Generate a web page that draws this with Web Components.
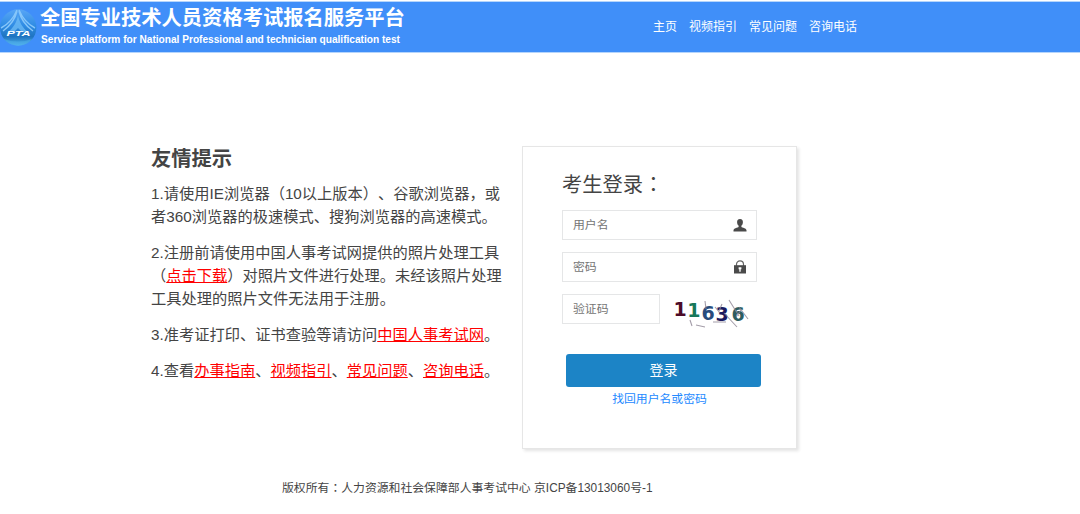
<!DOCTYPE html>
<html lang="zh-CN">
<head>
<meta charset="utf-8">
<title>全国专业技术人员资格考试报名服务平台</title>
<style>
    body {
        margin: 0;
        background: #fff;
        color: #444;
        font-family: "Liberation Sans", "Noto Sans CJK SC", sans-serif;
        text-spacing-trim: space-all;
        overflow: hidden;
    }
    main {
        display: flex;
        align-items: flex-start;
        padding: 93px 0 0 151px;
    }
    info-tips {
        margin-right: 20px;
    }
    /* the TC face keeps the mark in the middle of its cell */
    .mid {
        font-family: "Noto Sans CJK TC", sans-serif;
        line-height: 1;
    }
</style>
</head>
<body>
<site-header heading="全国专业技术人员资格考试报名服务平台" sub="Service platform for National Professional and technician qualification test">
    <nav-link>主页</nav-link>
    <nav-link>视频指引</nav-link>
    <nav-link>常见问题</nav-link>
    <nav-link>咨询电话</nav-link>
</site-header>
<main>
    <info-tips heading="友情提示">
        <tip-item>1.请使用IE浏览器（10以上版本）、谷歌浏览器，或<br>者360浏览器的极速模式、搜狗浏览器的高速模式。</tip-item>
        <tip-item>2.注册前请使用中国人事考试网提供的照片处理工具<br>（<red-link>点击下载</red-link>）对照片文件进行处理。未经该照片处理<br>工具处理的照片文件无法用于注册。</tip-item>
        <tip-item>3.准考证打印、证书查验等请访问<red-link>中国人事考试网</red-link>。</tip-item>
        <tip-item>4.查看<red-link>办事指南</red-link>、<red-link>视频指引</red-link>、<red-link>常见问题</red-link>、<red-link>咨询电话</red-link>。</tip-item>
    </info-tips>
    <login-card heading="考生登录">
        <input-field label="用户名">
            <svg slot="icon" width="14" height="13" viewBox="0 0 14 13" fill="#4a4a4a"><path d="M7 0C4.800 0 4 1.500 4.100 3.400c.1 1.500.7 2.600 1.500 3.200v1.500C4.800 9 .8 9.100.5 11.200V12.500h13v-1.300C13.200 9.100 9.200 9 8.400 8.100V6.600C9.200 6 9.800 4.900 9.900 3.400 10 1.500 9.200 0 7 0z"/></svg>
        </input-field>
        <input-field label="密码">
            <svg slot="icon" width="14" height="14" viewBox="0 0 14 14"><path d="M3.500 6V4.300a3.500 3.500 0 0 1 7 0V6" fill="none" stroke="#666" stroke-width="1.200"/><path d="M1 5.200h12v8.300H1z" fill="#4a4a4a"/><path d="M5.600 7.200h2.800v2H7.700v2.600H6.300V9.200h-.7z" fill="#fff"/></svg>
        </input-field>
        <div slot="code" style="display:flex">
            <input-field label="验证码" style="width:98px"></input-field>
            <captcha-image code="11636"></captcha-image>
        </div>
    </login-card>
</main>
<page-footer>版权所有<span class="mid" lang="zh-TW">：</span>人力资源和社会保障部人事考试中心 京ICP备13013060号-1</page-footer>

<script>
class SiteHeader extends HTMLElement {
    constructor() {
        super();
        this.shadow = this.attachShadow({ mode: 'open' });
    }

    connectedCallback() {
        this.shadow.innerHTML = `
        <style>
            :host {
                display: flex;
                box-sizing: border-box;
                height: 52px;
                margin-top: 1px;
                background: #408ff9;
                border-top: 1px solid #b5d5fc;
                border-bottom: 1px solid #b5d5fc;
                color: white;
            }
            .logo {
                width: 37px;
                height: 38px;
                margin-top: 6px;
            }
            .titles {
                width: 401px;
                padding-left: 3px;
                white-space: nowrap;
            }
            h1 {
                margin: 0;
                font: bold 20.28px/29px "Noto Sans CJK SC", sans-serif;
            }
            p {
                margin: 0 0 0 1px;
                font: bold 10.140px/18px "Liberation Sans", sans-serif;
            }
            nav {
                display: flex;
                gap: 12px;
                margin-left: 212px;
                padding-top: 16px;
            }
        </style>
        <svg class="logo" viewBox="0 0 37 38">
            <defs>
                <linearGradient id="globe" x1="0" y1="0" x2="0" y2="1">
                    <stop offset="0" stop-color="#58a6f6"/>
                    <stop offset=".45" stop-color="#2f8ce4"/>
                    <stop offset=".75" stop-color="#1f74c0"/>
                    <stop offset="1" stop-color="#52b4ee"/>
                </linearGradient>
            </defs>
            <circle cx="18.200" cy="19.500" r="18.200" fill="url(#globe)"/>
            <path d="M17 2C14 9 9 16 1 20M17 3C15 12 10 18 3 23M19 2C22 9 27 16 35 20M19 3C21 12 26 18 33 23" fill="none" stroke="#86c6fa" stroke-width="1.400"/>
            <path d="M18 7C17 14 13 20 8 24h6l4-4 4 4h6C23 20 19 14 18 7z" fill="#6fbcf5" opacity=".75"/>
            <path d="M4 31q14 5 28 0-5 6.500-14 6.500T4 31z" fill="#4fb0ec" opacity=".5"/>
            <text x="6.500" y="27.500" textLength="24" lengthAdjust="spacingAndGlyphs" font-family="Liberation Sans, sans-serif" font-size="7.500" font-weight="bold" font-style="italic" fill="#fff">PTA</text>
        </svg>
        <div class="titles">
            <h1>${this.getAttribute('heading')}</h1>
            <p>${this.getAttribute('sub')}</p>
        </div>
        <nav><slot></slot></nav>
        `;
    }
}

class NavLink extends HTMLElement {
    constructor() {
        super();
        this.attachShadow({ mode: 'open' }).innerHTML = `
        <style>
            :host {
                display: block;
                font-size: 12px;
                line-height: 18px;
                white-space: nowrap;
            }
        </style>
        <slot></slot>
        `;
    }
}

class InfoTips extends HTMLElement {
    constructor() {
        super();
        this.shadow = this.attachShadow({ mode: 'open' });
    }

    connectedCallback() {
        this.shadow.innerHTML = `
        <style>
            :host {
                display: block;
                width: 351px;
            }
            h2 {
                margin: 0 0 12px;
                padding-top: 1px;
                font-size: 20.3px;
                line-height: 24px;
            }
        </style>
        <h2>${this.getAttribute('heading')}</h2>
        <slot></slot>
        `;
    }
}

class TipItem extends HTMLElement {
    constructor() {
        super();
        this.attachShadow({ mode: 'open' }).innerHTML = `
        <style>
            :host {
                display: block;
                margin-bottom: 13.4px;
                font-size: 15.25px;
                line-height: 22.8px;
                white-space: nowrap;
            }
        </style>
        <slot></slot>
        `;
    }
}

class RedLink extends HTMLElement {
    constructor() {
        super();
        // inline element: no whitespace around the link
        this.attachShadow({ mode: 'open' }).innerHTML =
            '<style>:host { display: inline; } a { color: #f00; text-decoration: underline; }</style><a><slot></slot></a>';
    }
}

class LoginCard extends HTMLElement {
    constructor() {
        super();
        this.shadow = this.attachShadow({ mode: 'open' });
    }

    connectedCallback() {
        this.shadow.innerHTML = `
        <style>
            :host {
                display: block;
                box-sizing: border-box;
                width: 275px;
                height: 303px;
                padding: 24px 39px 0;
                border: 1px solid #e6e6e6;
                box-shadow: 2px 2px 3px #e4e4e4;
            }
            h3 {
                margin: 0 0 11px;
                font-size: 20.3px;
                font-weight: normal;
                line-height: 28px;
            }
            .colon {
                font-family: "Noto Sans CJK TC", sans-serif;
                line-height: 1;
            }
            .fields {
                display: flex;
                flex-direction: column;
                gap: 12px;
            }
            button {
                display: block;
                width: 195px;
                height: 33px;
                margin: 30px 0 0 4px;
                padding: 0 0 3px;
                border: 0;
                border-radius: 3px;
                background: #1c84c6;
                color: white;
                font: 14px "Noto Sans CJK SC", sans-serif;
            }
            a {
                display: block;
                margin: 3px 0 0;
                color: #2389ff;
                font-size: 11.85px;
                line-height: 18px;
                text-align: center;
            }
        </style>
        <h3>${this.getAttribute('heading')}<span class="colon" lang="zh-TW">：</span></h3>
        <div class="fields">
            <slot></slot>
            <slot name="code"></slot>
        </div>
        <button>登录</button>
        <a>找回用户名或密码</a>
        `;
    }
}

class InputField extends HTMLElement {
    constructor() {
        super();
        this.shadow = this.attachShadow({ mode: 'open' });
    }

    connectedCallback() {
        this.shadow.innerHTML = `
        <style>
            :host {
                display: flex;
                box-sizing: border-box;
                align-items: center;
                justify-content: space-between;
                height: 30px;
                padding: 0 9px 0 10px;
                border: 1px solid #e5e6e7;
                color: #757575;
                font-size: 11.85px;
            }
            span {
                padding-bottom: 3px;
            }
            ::slotted(svg) {
                display: block;
            }
        </style>
        <span>${this.getAttribute('label')}</span>
        <slot name="icon"></slot>
        `;
    }
}

class CaptchaImage extends HTMLElement {
    constructor() {
        super();
        this.shadow = this.attachShadow({ mode: 'open' });
    }

    connectedCallback() {
        const colors = ['#4d0b28', '#17785a', '#284b7c', '#1b1a60', '#2c5c60'];
        const xs = [8.5, 22.2, 36.5, 50.5, 66.5];
        const ys = [22, 23, 25.5, 26.5, 26.500];
        const digits = [...this.getAttribute('code')].map((d, i) =>
            `<text x="${xs[i]}" y="${ys[i]}" fill="${colors[i]}">${d}</text>`).join('');
        this.shadow.innerHTML = `
        <style>
            :host {
                display: block;
                width: 88px;
                height: 36px;
                margin: 0 -16px -6px 5px;
            }
            svg {
                display: block;
                font: bold 19px "DejaVu Sans", sans-serif;
            }
        </style>
        <svg width="88" height="36" viewBox="0 0 88 36">
            ${digits}
            <path d="M25 26l2 6M31 31l9 2M40 7l1 8M48 28h13M50 13l5 6M57 10l-3 7M59 19l13 14M64 6l10 16M74 13l9 12M71 23l5-7" fill="none" stroke="#8d8494" stroke-width="1.100" opacity=".8"/>
        </svg>
        `;
    }
}

class PageFooter extends HTMLElement {
    constructor() {
        super();
        this.attachShadow({ mode: 'open' }).innerHTML = `
        <style>
            :host {
                display: block;
                padding: 30px 0 0 282px;
                font-size: 11.85px;
                line-height: 18px;
                white-space: nowrap;
            }
        </style>
        <slot></slot>
        `;
    }
}

window.customElements.define('site-header', SiteHeader);
window.customElements.define('nav-link', NavLink);
window.customElements.define('info-tips', InfoTips);
window.customElements.define('tip-item', TipItem);
window.customElements.define('red-link', RedLink);
window.customElements.define('login-card', LoginCard);
window.customElements.define('input-field', InputField);
window.customElements.define('captcha-image', CaptchaImage);
window.customElements.define('page-footer', PageFooter);
</script>
</body>
</html>
